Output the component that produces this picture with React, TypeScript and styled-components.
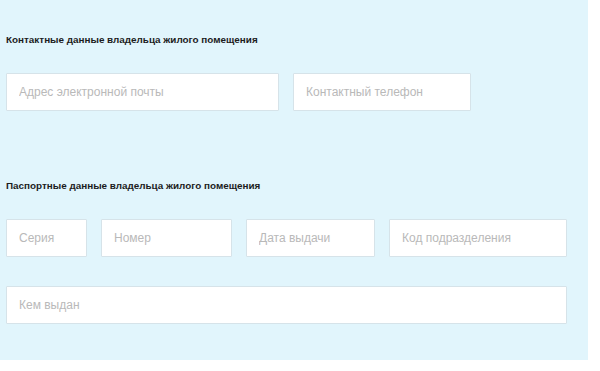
import React from 'react';
import styled, { createGlobalStyle } from 'styled-components';

const GlobalStyle = createGlobalStyle`
  html, body {
    margin: 0;
    padding: 0;
    background: #ffffff;
  }
  * {
    box-sizing: border-box;
  }
`;

const Panel = styled.div`
  width: 588px;
  height: 360px;
  background: #e1f5fc;
  padding: 34px 0 0 6px;
  font-family: "Liberation Sans", Arial, sans-serif;
`;

const Section = styled.section<{ $gap: number }>`
  margin-bottom: ${(p) => p.$gap}px;
`;

const Title = styled.h3`
  margin: 0 0 27px;
  font-size: 9.9px;
  line-height: 12px;
  font-weight: bold;
  color: #1c1c1c;
`;

const Row = styled.div`
  display: flex;
  gap: 14px;
  margin-bottom: 29px;

  &:last-child {
    margin-bottom: 0;
  }
`;

const Field = styled.input<{ $w: number }>`
  width: ${(p) => p.$w}px;
  height: 38px;
  padding: 0 12px;
  border: 1px solid #d6e3e9;
  background: #ffffff;
  font-family: "Liberation Sans", Arial, sans-serif;
  font-size: 12px;
  color: #333;
  outline: none;
  border-radius: 1px;

  &::placeholder {
    color: #b9b9b9;
  }
`;

export default function App() {
  return (
    <>
      <GlobalStyle />
      <Panel>
        <Section $gap={69}>
          <Title>Контактные данные владельца жилого помещения</Title>
          <Row>
            <Field $w={273} placeholder="Адрес электронной почты" />
            <Field $w={178} placeholder="Контактный телефон" />
          </Row>
        </Section>
        <Section $gap={0}>
          <Title>Паспортные данные владельца жилого помещения</Title>
          <Row>
            <Field $w={81} placeholder="Серия" />
            <Field $w={131} placeholder="Номер" />
            <Field $w={129} placeholder="Дата выдачи" />
            <Field $w={178} placeholder="Код подразделения" />
          </Row>
          <Row>
            <Field $w={561} placeholder="Кем выдан" />
          </Row>
        </Section>
      </Panel>
    </>
  );
}
